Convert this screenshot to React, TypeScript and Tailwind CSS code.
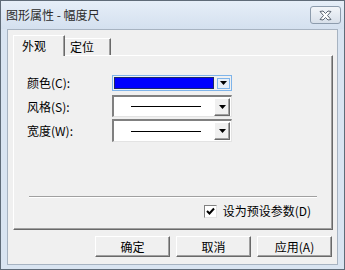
const font = { fontFamily: '"Noto Sans CJK SC", "DejaVu Sans", sans-serif' }

function Arrow() {
  return (
    <svg width="7" height="4" viewBox="0 0 7 4">
      <path d="M0 0h7L3.5 4z" fill="#000" />
    </svg>
  )
}

function DropButton({ small }: { small?: boolean }) {
  if (small) {
    return (
      <div className="w-[13px] h-[11px] flex items-center justify-center border border-[#7eb4ea] bg-[#e6eef7]">
        <Arrow />
      </div>
    )
  }
  return (
    <div className="w-[16px] h-[18px] flex items-center justify-center bg-[#f0f0f0] border-t border-l border-t-white border-l-white border-r border-b border-r-[#696969] border-b-[#696969] shadow-[inset_-1px_-1px_0_#a0a0a0]">
      <Arrow />
    </div>
  )
}

function LineCombo({ h }: { h: string }) {
  return (
    <div className={`w-[120px] ${h} flex items-center bg-white border-t-2 border-l-2 border-t-[#808080] border-l-[#808080] border-r border-b border-r-[#e3e3e3] border-b-[#e3e3e3] pr-px`}>
      <div className="flex-1 flex justify-center pl-[4px]">
        <div className="w-[70px] h-px bg-black" />
      </div>
      <DropButton />
    </div>
  )
}

function Btn({ label }: { label: string }) {
  return (
    <div className="w-[75px] h-[21px] flex items-center justify-center text-[12px] text-black bg-[#f0f0f0] border-t border-l border-t-white border-l-white border-r border-b border-r-[#696969] border-b-[#696969] shadow-[inset_-1px_-1px_0_#a0a0a0]">
      {label}
    </div>
  )
}

export default function App() {
  return (
    <div
      className="w-[345px] h-[270px] flex flex-col bg-[#d9e4f1] border border-[#5f6b78] overflow-hidden"
      style={font}
    >
      <div className="h-[28px] flex items-center justify-between pl-[5px] pr-[3px] bg-gradient-to-b from-[#e6eef8] to-[#d4e0ef]">
        <span className="text-[12px] text-[#2b2b2b] leading-none">图形属性 - 幅度尺</span>
        <div className="w-[31px] h-[18px] rounded-[3px] border border-[#8d9cad] bg-gradient-to-b from-[#f2f5f9] to-[#d8e0ea] flex items-center justify-center">
          <svg width="13" height="11" viewBox="0 0 13 11">
            <path
              d="M1 1.5L4 1 6.5 3.5 9 1 12 1.5 8.5 5.5 12 9.5 9 10 6.5 7.5 4 10 1 9.5 4.5 5.5z"
              fill="#fff"
              stroke="#5c6673"
              strokeWidth="1"
              strokeLinejoin="round"
            />
          </svg>
        </div>
      </div>

      <div className="flex-1 mx-[6px] mb-[4px] border border-[#a7b3c1] bg-[#f0f0f0] flex flex-col text-black">
        <div className="flex items-end h-[25px] pl-[5px] pt-[5px]">
          <div className="relative z-10 w-[52px] h-[21px] -mb-px flex items-center pl-[8px] text-[12px] bg-[#f0f0f0] border-t border-l border-t-white border-l-white border-r border-r-[#696969] shadow-[inset_-1px_0_0_#a0a0a0]">
            外观
          </div>
          <div className="w-[46px] h-[17px] flex items-center pl-[5px] text-[12px] bg-[#f0f0f0] border-t border-t-white border-r border-r-[#696969] shadow-[inset_-1px_0_0_#a0a0a0]">
            定位
          </div>
        </div>

        <div className="ml-[5px] mr-[4px] h-[175px] flex flex-col border-t border-l border-t-white border-l-white border-r border-b border-r-[#696969] border-b-[#696969] shadow-[inset_-1px_-1px_0_#a0a0a0]">
          <div className="flex flex-col pl-[13px] pt-[19px] text-[12px]">
            <div className="flex items-center h-[16px]">
              <span className="w-[85px]">颜色(C):</span>
              <div className="w-[120px] h-[16px] flex items-center gap-[3px] border border-[#7eb4ea] pl-px pr-px">
                <div className="flex-1 h-[12px] bg-[#0000ff] border border-[#1a2a6a]" />
                <DropButton small />
              </div>
            </div>
            <div className="flex items-center h-[22px] mt-[4px]">
              <span className="w-[85px] pt-[2px]">风格(S):</span>
              <LineCombo h="h-[22px]" />
            </div>
            <div className="flex items-center h-[23px] mt-[2px]">
              <span className="w-[85px]">宽度(W):</span>
              <LineCombo h="h-[23px]" />
            </div>
          </div>

          <div className="ml-[15px] w-[288px] mt-[54px] h-[2px] border-t border-t-[#a0a0a0] border-b border-b-white" />

          <div className="flex items-center justify-end pr-[21px] mt-[4px] gap-[6px] text-[12px]">
            <div className="w-[13px] h-[13px] bg-white border-t border-l border-t-[#808080] border-l-[#808080] border-r border-b border-r-[#e3e3e3] border-b-[#e3e3e3] flex items-center justify-center">
              <svg width="9" height="9" viewBox="0 0 9 9">
                <path d="M1 4l2.5 2.5L8 1.5" fill="none" stroke="#000" strokeWidth="2" />
              </svg>
            </div>
            <span>设为预设参数(D)</span>
          </div>
        </div>

        <div className="flex justify-end gap-[6px] pr-[5px] mt-[6px]">
          <Btn label="确定" />
          <Btn label="取消" />
          <Btn label="应用(A)" />
        </div>
      </div>
    </div>
  )
}
